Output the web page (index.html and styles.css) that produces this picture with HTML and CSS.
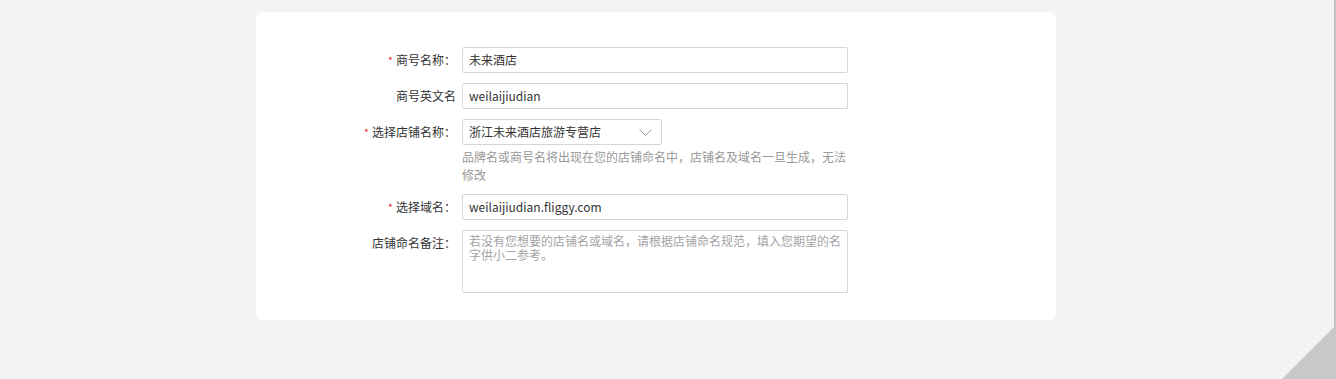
FILE: index.html
```html
<!DOCTYPE html>
<html lang="zh-CN">
<head>
<meta charset="utf-8">
<title>店铺命名</title>
<link rel="stylesheet" href="styles.css">
</head>
<body>
<div class="page">
  <div class="card">
    <form class="form">
      <label class="label"><span class="req">*</span>商号名称：</label>
      <div class="field"><div class="input">未来酒店</div></div>

      <label class="label">商号英文名</label>
      <div class="field"><div class="input">weilaijiudian</div></div>

      <label class="label"><span class="req">*</span>选择店铺名称：</label>
      <div class="field">
        <div class="select">
          <span>浙江未来酒店旅游专营店</span>
          <svg class="chev" width="13" height="8" viewBox="0 0 13 8"><path d="M0.5 0.5 L6.5 6.5 L12.5 0.5" fill="none" stroke="#a0a0a0" stroke-width="1"/></svg>
        </div>
        <p class="help">品牌名或商号名将出现在您的店铺命名中，店铺名及域名一旦生成，无法修改</p>
      </div>

      <label class="label"><span class="req">*</span>选择域名：</label>
      <div class="field"><div class="input">weilaijiudian.fliggy.com</div></div>

      <label class="label">店铺命名备注：</label>
      <div class="field"><div class="textarea">若没有您想要的店铺名或域名，请根据店铺命名规范，填入您期望的名字供小二参考。</div></div>
    </form>
  </div>
</div>
<div class="scrollline"></div>
<div class="curl"></div>
</body>
</html>
```
FILE: styles.css
```css
html, body {
  margin: 0;
  padding: 0;
  background: #f2f3f5;
  font-family: "Noto Sans CJK SC", "Liberation Sans", sans-serif;
  font-size: 12px;
  color: #333;
}
.page {
  padding: 12px 0 0 256px;
  height: 367px;
  overflow: hidden;
}
.card {
  width: 800px;
  height: 308px;
  background: #fff;
  border-radius: 6px;
  box-sizing: border-box;
  padding-top: 35px;
}
.form {
  margin: 0;
  display: grid;
  grid-template-columns: 200px 386px;
  column-gap: 6px;
  row-gap: 10px;
}
.label {
  text-align: right;
  line-height: 26px;
  height: 26px;
  color: #333;
  white-space: nowrap;
}
.req {
  color: #f23b3b;
  font-size: 11px;
  margin-right: 3px;
}
.field { min-width: 0; }
.input {
  height: 26px;
  box-sizing: border-box;
  border: 1px solid #d6d6d6;
  border-radius: 2px;
  padding: 0 6px;
  line-height: 24px;
  color: #333;
}
.select {
  width: 200px;
  height: 26px;
  box-sizing: border-box;
  border: 1px solid #d6d6d6;
  border-radius: 2px;
  padding: 0 9px 0 6px;
  line-height: 24px;
  display: flex;
  align-items: center;
  justify-content: space-between;
}
.chev { display: block; margin-top: 1px; }
.help {
  margin: 3px 0 0;
  color: #999;
  line-height: 18px;
}
.textarea {
  height: 63px;
  box-sizing: border-box;
  border: 1px solid #d6d6d6;
  border-radius: 2px;
  padding: 3px 6px;
  line-height: 14px;
  color: #a3a3a3;
}
.scrollline {
  position: fixed;
  top: 0;
  right: 0;
  width: 2px;
  height: 100%;
  background: #c4c4c4;
}
.curl {
  position: fixed;
  right: 0;
  bottom: 0;
  width: 54px;
  height: 54px;
  background: linear-gradient(135deg, transparent 49%, #c8c8c8 51%);
}
```
